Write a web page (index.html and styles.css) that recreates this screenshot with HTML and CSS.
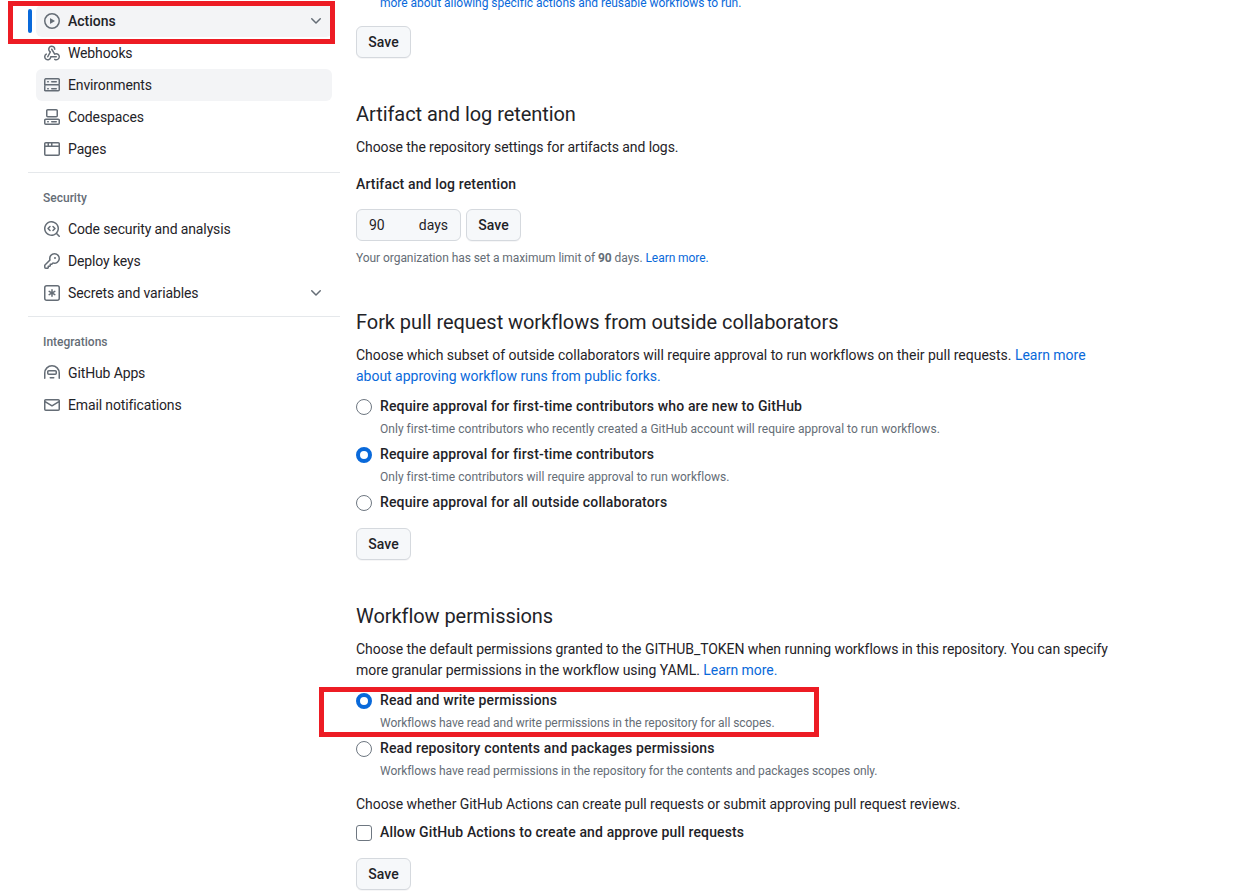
FILE: index.html
```html
<!DOCTYPE html>
<html lang="en">
<head>
  <meta charset="UTF-8">
  <meta name="viewport" content="width=device-width, initial-scale=1.0">
  <title>Actions settings</title>
  <link rel="stylesheet" href="styles.css">
</head>
<body>
  <div class="page">
    <nav class="sidebar">
      <ul class="nav-list">
        <li class="nav-item active">
          <svg class="icon" viewBox="0 0 16 16"><path d="M8 0a8 8 0 1 1 0 16A8 8 0 0 1 8 0ZM1.5 8a6.5 6.5 0 1 0 13 0 6.5 6.5 0 0 0-13 0Zm4.879-2.773 4.264 2.559a.25.25 0 0 1 0 .428l-4.264 2.559A.25.25 0 0 1 6 10.559V5.442a.25.25 0 0 1 .379-.215Z"/></svg>
          <span class="nav-label">Actions</span>
          <svg class="icon chevron" viewBox="0 0 16 16"><path d="M12.78 5.22a.749.749 0 0 1 0 1.06l-4.25 4.25a.749.749 0 0 1-1.06 0L3.22 6.28a.749.749 0 1 1 1.06-1.06L8 8.939l3.72-3.719a.749.749 0 0 1 1.06 0Z"/></svg>
        </li>
        <li class="nav-item">
          <svg class="icon" viewBox="0 0 16 16"><path d="M5.5 4.25a2.25 2.25 0 0 1 4.5 0 .75.75 0 0 0 1.5 0 3.75 3.75 0 1 0-6.14 2.889l-2.272 4.258a.75.75 0 0 0 1.324.706L7 7.25a.75.75 0 0 0-.309-1.017A2.25 2.25 0 0 1 5.5 4.25Z"/><path d="M7.364 3.607a.75.75 0 0 1 1.03.257l2.608 4.349a3.75 3.75 0 1 1-.628 6.785.75.75 0 0 1 .752-1.299 2.25 2.25 0 1 0-.033-3.88.75.75 0 0 1-1.03-.256L7.107 4.636a.75.75 0 0 1 .257-1.03Z"/><path d="M2.9 8.776A.75.75 0 0 1 2.625 9.8 2.25 2.25 0 1 0 6 11.75a.75.75 0 0 1 .75-.751h5.5a.75.75 0 0 1 0 1.5H7.425a3.751 3.751 0 1 1-5.55-3.998.75.75 0 0 1 1.024.274Z"/></svg>
          <span class="nav-label">Webhooks</span>
        </li>
        <li class="nav-item hovered">
          <svg class="icon" viewBox="0 0 16 16"><path d="M1.75 1h12.5c.966 0 1.75.784 1.75 1.75v4c0 .372-.116.717-.314 1 .198.283.314.628.314 1v4a1.75 1.75 0 0 1-1.75 1.75H1.75A1.75 1.75 0 0 1 0 13.75v-4c0-.372.116-.717.314-1a1.739 1.739 0 0 1-.314-1v-4C0 1.784.784 1 1.75 1ZM1.5 2.75v4c0 .138.112.25.25.25h12.5a.25.25 0 0 0 .25-.25v-4a.25.25 0 0 0-.25-.25H1.75a.25.25 0 0 0-.25.25Zm.25 5.75a.25.25 0 0 0-.25.25v4c0 .138.112.25.25.25h12.5a.25.25 0 0 0 .25-.25v-4a.25.25 0 0 0-.25-.25ZM7 4.75A.75.75 0 0 1 7.75 4h4.5a.75.75 0 0 1 0 1.5h-4.5A.75.75 0 0 1 7 4.75Zm.75 6.25h4.5a.75.75 0 0 1 0 1.5h-4.5a.75.75 0 0 1 0-1.5ZM3 4.75A.75.75 0 0 1 3.75 4h.5a.75.75 0 0 1 0 1.5h-.5A.75.75 0 0 1 3 4.75ZM3.75 11h.5a.75.75 0 0 1 0 1.5h-.5a.75.75 0 0 1 0-1.5Z"/></svg>
          <span class="nav-label">Environments</span>
        </li>
        <li class="nav-item">
          <svg class="icon" viewBox="0 0 16 16"><path d="M0 11.25c0-.966.784-1.75 1.75-1.75h12.5c.966 0 1.75.784 1.75 1.75v3A1.75 1.75 0 0 1 14.25 16H1.75A1.75 1.75 0 0 1 0 14.25Zm2-9.5C2 .784 2.784 0 3.75 0h8.5C13.216 0 14 .784 14 1.75v5a1.75 1.75 0 0 1-1.75 1.75h-8.5A1.75 1.75 0 0 1 2 6.75Zm1.75-.25a.25.25 0 0 0-.25.25v5c0 .138.112.25.25.25h8.5a.25.25 0 0 0 .25-.25v-5a.25.25 0 0 0-.25-.25Zm-2 9.5a.25.25 0 0 0-.25.25v3c0 .138.112.25.25.25h12.5a.25.25 0 0 0 .25-.25v-3a.25.25 0 0 0-.25-.25Z"/><path d="M7 12.75a.75.75 0 0 1 .75-.75h4.5a.75.75 0 0 1 0 1.5h-4.5a.75.75 0 0 1-.75-.75Zm-4 0a.75.75 0 0 1 .75-.75h.5a.75.75 0 0 1 0 1.5h-.5a.75.75 0 0 1-.75-.75Z"/></svg>
          <span class="nav-label">Codespaces</span>
        </li>
        <li class="nav-item">
          <svg class="icon" viewBox="0 0 16 16"><path d="M0 2.75C0 1.784.784 1 1.75 1h12.5c.966 0 1.75.784 1.75 1.75v10.5A1.75 1.75 0 0 1 14.25 15H1.75A1.75 1.75 0 0 1 0 13.25ZM14.5 6h-13v7.25c0 .138.112.25.25.25h12.5a.25.25 0 0 0 .25-.25Zm-6-3.5v2h6V2.75a.25.25 0 0 0-.25-.25ZM5 2.5v2h2v-2Zm-3.25 0a.25.25 0 0 0-.25.25V4.5h2v-2Z"/></svg>
          <span class="nav-label">Pages</span>
        </li>
      </ul>

      <div class="nav-divider"></div>
      <div class="nav-heading">Security</div>
      <ul class="nav-list">
        <li class="nav-item">
          <svg class="icon" viewBox="0 0 16 16"><path d="M8.47 4.97a.75.75 0 0 0 0 1.06L9.94 7.5 8.47 8.97a.75.75 0 1 0 1.06 1.06l2-2a.75.75 0 0 0 0-1.06l-2-2a.75.75 0 0 0-1.06 0ZM6.53 6.03a.75.75 0 0 0-1.06-1.06l-2 2a.75.75 0 0 0 0 1.06l2 2a.75.75 0 1 0 1.06-1.06L5.06 7.5l1.47-1.47Z"/><path d="M12.246 13.307a7.501 7.501 0 1 1 1.06-1.06l2.474 2.473a.749.749 0 0 1-.326 1.275.749.749 0 0 1-.734-.215ZM1.5 7.5a6.002 6.002 0 0 0 3.608 5.504 6.002 6.002 0 0 0 6.486-1.117.748.748 0 0 1 .292-.293A6 6 0 1 0 1.5 7.5Z"/></svg>
          <span class="nav-label">Code security and analysis</span>
        </li>
        <li class="nav-item">
          <svg class="icon" viewBox="0 0 16 16"><path d="M10.5 0a5.499 5.499 0 1 1-1.288 10.848l-.932.932a.749.749 0 0 1-.53.22H7v.75a.749.749 0 0 1-.22.53l-.5.5a.749.749 0 0 1-.53.22H5v.75a.749.749 0 0 1-.22.53l-.5.5a.749.749 0 0 1-.53.22h-2A1.75 1.75 0 0 1 0 14.25v-2c0-.199.079-.389.22-.53l4.932-4.932A5.5 5.5 0 0 1 10.5 0Zm-4 5.5c-.001.431.069.86.205 1.269a.75.75 0 0 1-.181.768L1.5 12.56v1.69c0 .138.112.25.25.25h1.69l.06-.06v-1.19a.75.75 0 0 1 .75-.75h1.19l.06-.06v-1.19a.75.75 0 0 1 .75-.75h1.19l1.023-1.025a.75.75 0 0 1 .768-.18A4 4 0 1 0 6.5 5.5ZM11 6a1 1 0 1 1 0-2 1 1 0 0 1 0 2Z"/></svg>
          <span class="nav-label">Deploy keys</span>
        </li>
        <li class="nav-item">
          <svg class="icon" viewBox="0 0 16 16"><path d="M0 2.75A2.75 2.75 0 0 1 2.75 0h10.5A2.75 2.75 0 0 1 16 2.75v10.5A2.75 2.75 0 0 1 13.25 16H2.75A2.75 2.75 0 0 1 0 13.25ZM2.75 1.5a1.25 1.25 0 0 0-1.25 1.25v10.5c0 .69.56 1.25 1.25 1.25h10.5c.69 0 1.25-.56 1.25-1.25V2.75c0-.69-.56-1.25-1.25-1.25Z"/><path d="M8 4a.75.75 0 0 1 .75.75V6.7l1.69-.975a.75.75 0 0 1 .75 1.3L9.5 8l1.69.976a.75.75 0 0 1-.75 1.298L8.75 9.3v1.951a.75.75 0 0 1-1.5 0V9.299l-1.69.976a.75.75 0 0 1-.75-1.3L6.5 8l-1.69-.975a.75.75 0 0 1 .75-1.3l1.69.976V4.75A.75.75 0 0 1 8 4Z"/></svg>
          <span class="nav-label">Secrets and variables</span>
          <svg class="icon chevron" viewBox="0 0 16 16"><path d="M12.78 5.22a.749.749 0 0 1 0 1.06l-4.25 4.25a.749.749 0 0 1-1.06 0L3.22 6.28a.749.749 0 1 1 1.06-1.06L8 8.939l3.72-3.719a.749.749 0 0 1 1.06 0Z"/></svg>
        </li>
      </ul>

      <div class="nav-divider"></div>
      <div class="nav-heading">Integrations</div>
      <ul class="nav-list">
        <li class="nav-item">
          <svg class="icon" viewBox="0 0 16 16"><path d="M0 8a8 8 0 0 1 16 0v5.25a.75.75 0 0 1-1.5 0V8a6.5 6.5 0 1 0-13 0v5.25a.75.75 0 0 1-1.5 0Zm3-1.25C3 5.784 3.784 5 4.75 5h6.5c.966 0 1.75.784 1.75 1.75v1.5A1.75 1.75 0 0 1 11.25 10h-6.5A1.75 1.75 0 0 1 3 8.25Zm1.75-.25a.25.25 0 0 0-.25.25v1.5c0 .138.112.25.25.25h6.5a.25.25 0 0 0 .25-.25v-1.5a.25.25 0 0 0-.25-.25ZM6.25 12h3.5a.75.75 0 0 1 0 1.5h-3.5a.75.75 0 0 1 0-1.5Z"/></svg>
          <span class="nav-label">GitHub Apps</span>
        </li>
        <li class="nav-item">
          <svg class="icon" viewBox="0 0 16 16"><path d="M1.75 2h12.5c.966 0 1.75.784 1.75 1.75v8.5A1.75 1.75 0 0 1 14.25 14H1.75A1.75 1.75 0 0 1 0 12.25v-8.5C0 2.784.784 2 1.75 2ZM1.5 12.251c0 .138.112.25.25.25h12.5a.25.25 0 0 0 .25-.25V5.809L8.38 9.397a.75.75 0 0 1-.76 0L1.5 5.809v6.442Zm13-8.181v-.32a.25.25 0 0 0-.25-.25H1.75a.25.25 0 0 0-.25.25v.32L8 7.88Z"/></svg>
          <span class="nav-label">Email notifications</span>
        </li>
      </ul>
    </nav>

    <main class="content">
      <section class="section">
        <div class="note cut-line"><a href="#">more about allowing specific actions and reusable workflows to run.</a></div>
        <button class="btn">Save</button>
      </section>

      <section class="section">
        <h2>Artifact and log retention</h2>
        <p class="tight">Choose the repository settings for artifacts and logs.</p>
        <div class="field-title">Artifact and log retention</div>
        <div class="retention-row">
          <div class="days-input"><span>90</span><span>days</span></div>
          <button class="btn">Save</button>
        </div>
        <div class="note note-tight retention-note">Your organization has set a maximum limit of <b>90</b> days. <a href="#">Learn more.</a></div>
      </section>

      <section class="section">
        <h2>Fork pull request workflows from outside collaborators</h2>
        <p class="loose">Choose which subset of outside collaborators will require approval to run workflows on their pull requests. <a href="#">Learn more<br>about approving workflow runs from public forks.</a></p>
        <div class="options">
          <label class="option"><input type="radio" name="fork"><span class="option-title">Require approval for first-time contributors who are new to GitHub</span></label>
          <div class="note note-wide option-note">Only first-time contributors who recently created a GitHub account will require approval to run workflows.</div>
          <label class="option"><input type="radio" name="fork" checked><span class="option-title">Require approval for first-time contributors</span></label>
          <div class="note note-wide option-note">Only first-time contributors will require approval to run workflows.</div>
          <label class="option"><input type="radio" name="fork"><span class="option-title">Require approval for all outside collaborators</span></label>
        </div>
        <button class="btn after-option">Save</button>
      </section>

      <section class="section">
        <h2>Workflow permissions</h2>
        <p>Choose the default permissions granted to the GITHUB_TOKEN when running workflows in this repository. You can specify<br>more granular permissions in the workflow using YAML. <a href="#">Learn more.</a></p>
        <div class="options">
          <label class="option"><input type="radio" name="perm" checked><span class="option-title">Read and write permissions</span></label>
          <div class="note note-tight option-note">Workflows have read and write permissions in the repository for all scopes.</div>
          <label class="option"><input type="radio" name="perm"><span class="option-title">Read repository contents and packages permissions</span></label>
          <div class="note note-tight option-note">Workflows have read permissions in the repository for the contents and packages scopes only.</div>
        </div>
        <p class="pr-text">Choose whether GitHub Actions can create pull requests or submit approving pull request reviews.</p>
        <label class="option"><input type="checkbox"><span class="option-title">Allow GitHub Actions to create and approve pull requests</span></label>
        <button class="btn after-option">Save</button>
      </section>
    </main>
  </div>

  <!-- red annotation boxes drawn over the screenshot -->
  <div class="callout callout-nav"></div>
  <div class="callout callout-perm"></div>
</body>
</html>
```

FILE: styles.css
```css
* {
  margin: 0;
  padding: 0;
  box-sizing: border-box;
}

body {
  font-family: Roboto, "Noto Sans", sans-serif;
  font-size: 14px;
  line-height: 21px;
  color: #1f2328;
  background: #fff;
  height: 893px;
  overflow: hidden;
  position: relative;
}

a {
  color: #0969da;
  text-decoration: none;
}

p {
  letter-spacing: -0.05px;
}

p.tight {
  letter-spacing: -0.09px;
}

p.loose {
  letter-spacing: -0.02px;
}

.page {
  display: flex;
  padding-left: 28px;
}

/* Sidebar */
.sidebar {
  width: 312px;
  flex-shrink: 0;
  padding-top: 5px;
}

.nav-list {
  list-style: none;
  padding: 0 8px;
}

.nav-item {
  display: flex;
  align-items: center;
  gap: 8px;
  height: 32px;
  padding: 0 8px;
  border-radius: 6px;
  position: relative;
}

.nav-label {
  flex: 1;
  letter-spacing: -0.13px;
}

.nav-item.active,
.nav-item.hovered {
  background: #f3f4f6;
}

.nav-item.active .nav-label {
  font-weight: 500;
  letter-spacing: 0;
}

/* Blue marker next to the selected item */
.nav-item.active::before {
  content: "";
  position: absolute;
  left: -8px;
  top: 4px;
  width: 4px;
  height: 24px;
  border-radius: 6px;
  background: #0969da;
}

.icon {
  width: 16px;
  height: 16px;
  fill: #656d76;
  flex-shrink: 0;
}

.nav-divider {
  height: 1px;
  margin-top: 7px;
  background: #e5e8eb;
}

.nav-heading {
  padding: 16px 15px 6px;
  font-size: 12px;
  line-height: 18px;
  font-weight: 500;
  color: #656d76;
}

/* Main column */
.content {
  width: 770px;
  margin-left: 16px;
  margin-top: -6px;
  flex-shrink: 0;
}

.section {
  margin-bottom: 41px;
}

h2 {
  font-size: 20px;
  line-height: 30px;
  font-weight: 400;
  letter-spacing: -0.06px;
  margin-bottom: 8px;
}

.cut-line {
  margin-bottom: 14px;
  padding-left: 24px;
  letter-spacing: -0.02px;
}

.btn {
  display: block;
  height: 32px;
  width: 55px;
  font: inherit;
  font-weight: 500;
  color: #1f2328;
  background: #f6f8fa;
  border: 1px solid #d5d9de;
  border-radius: 6px;
  box-shadow: 0 1px 0 rgba(31, 35, 40, 0.04);
}

.field-title {
  font-weight: 500;
  letter-spacing: 0.14px;
  margin-top: 16px;
  margin-bottom: 14px;
}

.retention-row {
  display: flex;
  gap: 5px;
}

.days-input {
  display: flex;
  justify-content: space-between;
  align-items: center;
  width: 105px;
  height: 32px;
  padding: 0 12px;
  background: #f6f8fa;
  border: 1px solid #d5d9de;
  border-radius: 6px;
}

.note {
  font-size: 12px;
  line-height: 18px;
  color: #656d76;
}

.note-wide {
  letter-spacing: 0.03px;
}

.note-tight {
  letter-spacing: -0.06px;
}

.retention-note {
  margin-top: 8px;
  margin-bottom: -1px;
}

.options {
  margin-top: 9px;
}

.option {
  display: flex;
  align-items: center;
  gap: 8px;
  height: 21px;
}

.option-title {
  font-weight: 500;
  letter-spacing: 0.14px;
}

.option-note {
  padding-left: 24px;
  margin-top: 3px;
  margin-bottom: 6px;
}

input[type="radio"],
input[type="checkbox"] {
  appearance: none;
  width: 16px;
  height: 16px;
  flex-shrink: 0;
  background: #fff;
  border: 1px solid #6e7781;
}

input[type="radio"] {
  border-radius: 50%;
}

input[type="radio"]:checked {
  border: 4.5px solid #0969da;
}

input[type="checkbox"] {
  border-radius: 3px;
}

.after-option {
  margin-top: 15px;
}

.pr-text {
  margin-top: 14px;
  margin-bottom: 7px;
}

/* Annotations */
.callout {
  position: absolute;
  border: 5px solid #ed1c24;
}

.callout-nav {
  left: 8px;
  top: 1px;
  width: 327px;
  height: 43px;
}

.callout-perm {
  left: 319px;
  top: 687px;
  width: 500px;
  height: 50px;
}
```
